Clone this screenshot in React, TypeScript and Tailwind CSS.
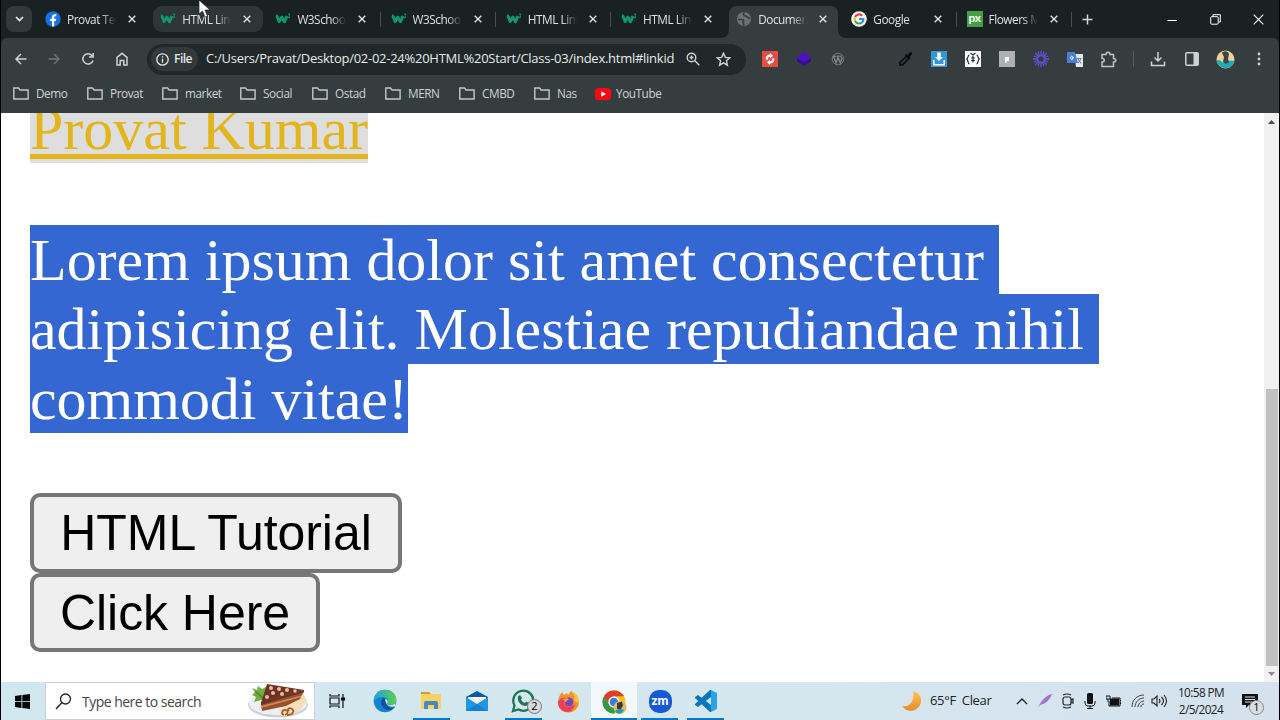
import React from "react";

type P = { children?: React.ReactNode };
const UI = "font-['Open_Sans','Noto_Sans',sans-serif]";

const Facebook = () => (
  <svg width="16" height="16" viewBox="0 0 16 16"><circle cx="8" cy="8" r="7.7" fill="#1672ea" /><path d="M7 15.6V10H5.2V7.7H7V6.2C7 4.2 8 3.2 9.800 3.200l1.500.1v2h-1C9.400 5.300 9.200 5.800 9.200 6.500v1.200h2L10.900 10H9.200v5.600z" fill="#fff" /></svg>
);
const W3 = () => (
  <svg width="16" height="16" viewBox="0 0 16 16" fill="none" stroke="#0c9a6c"><path d="M1 4.500C2.500 5 3 8 4.200 10.500L6.800 6.200l2.700 4.500L12 5" strokeWidth="3" strokeLinejoin="round" /><path d="M13 3h1.500v1.300l-.8.700.8.500v1.200H13" strokeWidth="1" /></svg>
);
const Globe = () => (
  <svg width="16" height="16" viewBox="0 0 16 16"><circle cx="8" cy="8" r="7" fill="#6b7375" /><path d="M2 8.500h4c2 0 2 1.500 1 2.500l1 3.500M8.500 1.500c-2 1.500-1 3.500 1 3.500s1.500 2.500 4.500 2.500" stroke="#353d3e" strokeWidth="1.700" fill="none" /></svg>
);
const Google = ({ s = 16 }: { s?: number }) => (
  <svg width={s} height={s} viewBox="0 0 16 16" fill="none"><circle cx="8" cy="8" r="7.800" fill="#fff" /><g strokeWidth="2.100"><path d="M4 6a4.600 4.600 0 0 1 7.300-1.300" stroke="#ea4335" /><path d="M4 10.200a4.600 4.600 0 0 1 0-4.300" stroke="#fbbc05" /><path d="M11 11.500A4.600 4.600 0 0 1 4 10.100" stroke="#34a853" /><path d="M8 8h4.500c0 1.500-.5 2.700-1.600 3.500" stroke="#4285f4" /></g></svg>
);
const Px = () => <span className="flex size-4 items-center justify-center bg-[#43a047] pb-[2px] font-['Lato',sans-serif] text-[12px] leading-none font-bold tracking-[-0.500px] text-white">px</span>;
const Close = () => (
  <svg width="8" height="8" viewBox="0 0 8 8" stroke="#dfe3e3" strokeWidth="1.400"><path d="M.7.7l6.600 6.600M7.300.7L.7 7.300" /></svg>
);

const tabs = [
  { t: "Provat Tec", i: <Facebook />, sep: false },
  { t: "HTML Link", i: <W3 />, sep: false, hover: true },
  { t: "W3Schoo", i: <W3 />, sep: true },
  { t: "W3Schoo", i: <W3 />, sep: true },
  { t: "HTML Link", i: <W3 />, sep: true },
  { t: "HTML Link", i: <W3 />, sep: false },
  { t: "Documen", i: <Globe />, sep: false, active: true },
  { t: "Google", i: <Google />, sep: true },
  { t: "Flowers M", i: <Px />, sep: true },
];

const Tab = ({ t, i, sep, hover, active }: { t: string; i: React.ReactNode; sep: boolean; hover?: boolean; active?: boolean }) => (
  <div className="relative h-[38px] w-[115.200px] shrink-0 pt-[6px]">
    {active && (
      <svg className="absolute top-[6px] left-[-9px]" width="129" height="32" viewBox="0 0 129 32"><path d="M0 32q9 0 9-9V8q0-8 8-8h93q8 0 8 8v15q0 9 9 9z" fill="#353d3e" /></svg>
    )}
    <div className={`relative flex h-[26px] w-[110px] items-center rounded-[9px] pl-[7px] ${hover ? "bg-[#2e3638]" : ""}`}>
      <span className="mr-[6px] flex size-4 shrink-0">{i}</span>
      <span className="w-[49px] overflow-hidden pt-px text-[11.800px] tracking-[-0.450px] whitespace-nowrap text-[#dce1e1] [mask-image:linear-gradient(90deg,#000_70%,transparent_100%)]">{t}</span>
      <span className="ml-[12px] shrink-0"><Close /></span>
    </div>
    {sep && <span className="absolute top-[12px] right-[2.500px] h-[15px] w-px bg-[#465052]" />}
  </div>
);

const Cell = ({ children }: P) => <span className="flex w-[33.850px] shrink-0 items-center justify-center">{children}</span>;
const Folder = () => (
  <svg width="16" height="13" viewBox="0 0 16 13" fill="none" stroke="#c4c9ca" strokeWidth="1.400"><path d="M.8 1h4.700l1.600 2h8v9H.8z" /></svg>
);
const marks: [string, string][] = [["Demo", "w-[74px]"], ["Provat", "w-[75px]"], ["market", "w-[78px]"], ["Social", "w-[72px]"], ["Ostad", "w-[73px]"], ["MERN", "w-[74px]"], ["CMBD", "w-[75px]"], ["Nas", "w-[61px]"]];

const Chrome = () => (
  <svg width="28" height="28" viewBox="0 0 28 28"><circle cx="12" cy="13" r="11.500" fill="#fbc116" /><path d="M2 7.300A11.500 11.500 0 0 1 22 7.300H12a5.700 5.700 0 0 0-5 8.400z" fill="#de3d31" /><path d="M2 7.300A11.500 11.500 0 0 0 12 24.500l5-8.700a5.700 5.700 0 0 1-10 0z" fill="#2e9a4b" /><circle cx="12" cy="13" r="5.500" fill="#fff" /><circle cx="12" cy="13" r="4.300" fill="#3b78e0" /><circle cx="18" cy="18.500" r="6.500" fill="#e3b76f" /><path d="M15 14l5-1.500 1 4-3 5-3-2z" fill="#3b3b38" /><path d="M13 22c2-2 6-3 9-1-2 4.500-7 5-9 1z" fill="#18a5a5" /></svg>
);
const Edge = () => (
  <svg width="24" height="24" viewBox="0 0 24 24"><defs><linearGradient id="eg" x2="1"><stop stopColor="#1da4dc" /><stop offset="1" stopColor="#5bd04a" /></linearGradient></defs><circle cx="12" cy="12" r="11.300" fill="#1683d2" /><path d="M.8 12C1 5 6 .7 12 .7c6.500 0 11.300 4.500 11.300 9.500 0 4-3 6-6 6-2.500 0-3.500-1.200-2.500-2.500 1-1.600 0-5.200-4.500-5.700C6 7.500 2 9.500.8 12z" fill="url(#eg)" /><path d="M10 9c-4 4-1 12 6 12 3 0 5-1.500 6-3-4 2-9 0-9-5 0-2-1-4-3-4z" fill="#114f9f" /><path d="M12 10.500c1.500-1 3.500 1.500 2.500 3.300-1 1.600 1 2.500 2.500 2.500 2 0 4-.8 5.300-2.300L22.500 17c-4 2-9.500 0-10.500-6.500z" fill="#d5e6ed" /></svg>
);
const Cake = () => (
  <svg width="62" height="36" viewBox="0 0 62 36"><ellipse cx="31" cy="22" rx="30" ry="12.500" fill="#cbd0d6" /><ellipse cx="31" cy="20.500" rx="29" ry="11.500" fill="#edf0f3" /><path d="M5 5l5 2 1-4 4 3 6-3-2 9 2 3-14 4 2-5-4-2 3-3z" fill="#71ae3d" /><path d="M8 8l9 8" stroke="#4c8431" strokeWidth="1.500" /><path d="M20 1l37 6-43 13z" fill="#6b3324" /><path d="M14 19L57 7l-3 13-39 8z" fill="#98502b" /><path d="M14 19L57 7v2L14 22z" fill="#6b3324" /><path d="M14 23l42-11v1.500L14 25z" fill="#c98a5d" /><path d="M31 27l22-11 3-6 4 8-8 11-16 5z" fill="#f4dfba" /><g fill="#f2b8a0"><circle cx="24" cy="5" r="2" /><circle cx="32" cy="6" r="2" /><circle cx="40" cy="7" r="2" /><circle cx="48" cy="8" r="1.800" /><circle cx="26" cy="10" r="2" /><circle cx="35" cy="11" r="2" /><circle cx="20" cy="14" r="2" /></g><path d="M37 32c-3-1-2-5 1-5 4 0 3 4 0 5m2 0c6 0 8-4 5-6s-5 0-3 2" fill="none" stroke="#a65e30" strokeWidth="1.800" /></svg>
);

const Task = ({ children, w, line, active }: P & { w: string; line?: string; active?: boolean }) => (
  <div className={`relative flex h-full shrink-0 items-center justify-center ${w} ${active ? "bg-[#f3f8fb]" : ""}`}>
    {children}
    {line && <span className={`absolute bottom-0 h-[2px] bg-[#0878c8] ${line}`} />}
  </div>
);

export default function App() {
  return (
    <div className={`relative flex h-[720px] w-[1280px] flex-col overflow-hidden border-x border-black bg-white ${UI}`}>
      <header className="flex h-[38px] shrink-0 bg-[#192123]">
        <button className="mt-[6px] mr-[6px] ml-[5px] flex size-[26px] shrink-0 items-center justify-center rounded-[8px] bg-[#323a3c]">
          <svg width="9" height="6" viewBox="0 0 9 6" fill="none" stroke="#e9eded" strokeWidth="1.700"><path d="M1 1l3.500 3.500L8 1" /></svg>
        </button>
        {tabs.map((x, k) => <Tab key={k} {...x} />)}
        <svg className="mt-[13.500px] ml-[7px] shrink-0" width="11" height="11" viewBox="0 0 11 11" stroke="#d4dada" strokeWidth="1.500"><path d="M5.500.5v10M.5 5.500h10" /></svg>
        <div className="mt-[13px] ml-auto flex h-3 items-center gap-[32px] pr-[15px]">
          <svg width="11" height="11" viewBox="0 0 11 11" stroke="#fff"><path d="M.5 6.500h9.500" /></svg>
          <svg width="11" height="11" viewBox="0 0 11 11" fill="none" stroke="#fff"><rect x=".7" y="2.700" width="7.500" height="7.500" rx="1" /><path d="M3 2.500V.7h7.300V8H8.500" /></svg>
          <svg width="11" height="11" viewBox="0 0 11 11" stroke="#fff" strokeWidth="1.100"><path d="M.7.7l9.600 9.600M10.300.7L.7 10.300" /></svg>
        </div>
      </header>

      <div className="shrink-0 bg-[#192123]">
        <div className="flex h-[42px] items-center rounded-t-[6px] bg-[#353d3e]">
          <div className="flex w-[146px] shrink-0 items-center pl-[13px]">
            <svg width="14" height="14" viewBox="0 0 14 14" fill="none" stroke="#cdd2d3" strokeWidth="1.500"><path d="M12.500 7H2M7 2L2 7l5 5" /></svg>
            <svg className="ml-[19px]" width="14" height="14" viewBox="0 0 14 14" fill="none" stroke="#70787a" strokeWidth="1.300"><path d="M1.500 7H12M7 2l5 5-5 5" /></svg>
            <svg className="ml-[20px]" width="14" height="14" viewBox="0 0 14 14" fill="none" stroke="#cdd2d3" strokeWidth="1.500"><path d="M12 8.500A5.200 5.200 0 1 1 11 3.500l1 1.200M12.200 1v4H8" /></svg>
            <svg className="ml-[20px]" width="14" height="14" viewBox="0 0 14 14" fill="none" stroke="#cdd2d3" strokeWidth="1.500"><path d="M2 5.300L7 1.300l5 4V13H8.800V8.500H5.200V13H2z" /></svg>
          </div>
          <div className="flex h-[31px] w-[599px] shrink-0 items-center rounded-full bg-[#202829] pl-[4px]">
            <div className="flex h-[24px] w-[47px] items-center rounded-full bg-[#31393a] pl-[5px]">
              <svg width="13" height="13" viewBox="0 0 13 13" fill="none" stroke="#e1e5e5" strokeWidth="1.300"><circle cx="6.500" cy="6.500" r="5.700" /><path d="M6.500 5.700v4M6.500 3.200v1.400" /></svg>
              <span className="ml-[5px] text-[12px] font-semibold tracking-[-0.500px] text-[#e1e5e5]">File</span>
            </div>
            <span className="ml-[8px] w-[480px] text-[13px] tracking-[-0.265px] whitespace-nowrap text-[#e6eaea]">C:/Users/Pravat/Desktop/02-02-24%20HTML%20Start/Class-03/index.html#linkid</span>
            <svg className="shrink-0" width="14" height="14" viewBox="0 0 14 14" fill="none" stroke="#cdd2d3" strokeWidth="1.400"><circle cx="5.500" cy="5.500" r="4.300" /><path d="M8.800 8.800l4.500 4.500M3.500 5.500h4M5.500 3.500v4" /></svg>
            <svg className="ml-[16px] shrink-0" width="15" height="15" viewBox="0 0 15 15" fill="none" stroke="#cdd2d3" strokeWidth="1.400"><path d="M7.500 1.200l1.800 4.200 4.500.4-3.400 3 1 4.400-3.900-2.400-3.900 2.400 1-4.400-3.400-3 4.500-.4z" /></svg>
          </div>
          <div className="ml-[7px] flex">
            <Cell><svg width="16" height="16" viewBox="0 0 16 16"><rect width="16" height="16" rx="1" fill="#e94b45" /><path d="M4 9c-1-3 1-5.500 4-5.500V1.800L11 5 8 7.500V5.700C6.500 5.700 5.700 7 6.200 8.300zM12 7c1 3-1 5.500-4 5.500v1.700L5 11l3-2.500v1.800c1.500 0 2.300-1.300 1.800-2.600z" fill="#fff" /></svg></Cell>
            <Cell><svg width="16" height="16" viewBox="0 0 16 16"><path d="M8 1l7 5-7 5-7-5z" fill="#5010c8" /><path d="M1 7l7 4 7-4v3l-7 5-7-5z" fill="#3a0b9c" /></svg></Cell>
            <Cell><svg width="14" height="14" viewBox="0 0 14 14" fill="none" stroke="#7e8688"><circle cx="7" cy="7" r="5.800" strokeWidth=".8" /><path d="M2.500 4.500l2.500 6.500L7 5l2.300 6L11 6.500 9.500 3.500M1.800 4.300h3M5.600 4.300h3" strokeWidth="1.400" /></svg></Cell>
            <Cell />
            <Cell><svg width="15" height="16" viewBox="0 0 15 16"><path d="M9 5l2 2-6.500 7H1.800v-2.500z" fill="none" stroke="#07070d" strokeWidth="1.600" /><path d="M7 4l1-1 1.500 1L12 1.500q2-1 2 1.500L11.500 6l1 1-1.500 1.500z" fill="#07070d" /></svg></Cell>
            <Cell><svg width="16" height="16" viewBox="0 0 16 16"><rect width="16" height="16" fill="#3399d5" /><path d="M6.300 1.500h3.400V6H12l-4 4-4-4h2.300zM2 9h1.500v4h9V9H14v5.500H2z" fill="#fff" /></svg></Cell>
            <Cell><svg width="16" height="16" viewBox="0 0 16 16"><rect width="16" height="16" fill="#fff" /><path d="M4.500 4C2.500 4 3.500 7 1.800 8c1.700 1 .7 5 2.700 5M11.500 4c2 0 1 3 2.700 4-1.700 1-.7 5-2.700 5M5.500 2L8 4l2.500-2M6.200 7h3.600M6.200 9.500h3.600M8 5v6.500" fill="none" stroke="#20292b" strokeWidth="1.200" /></svg></Cell>
            <Cell><svg width="16" height="16" viewBox="0 0 16 16"><rect width="16" height="16" fill="#aeb1b2" /><path d="M6 6h4v4H8v1.500H6z" fill="#f7f7f7" /></svg></Cell>
            <Cell><svg width="16" height="16" viewBox="0 0 16 16" stroke="#6450da" strokeWidth="1.300"><circle cx="8" cy="8" r="3.500" fill="none" /><path d="M8 0v5M8 11v5M0 8h5M11 8h5M2.300 2.300L6 6M10 10l3.700 3.700M2.300 13.700L6 10M10 6l3.700-3.700M5 .7l1.500 4M9.500 11.300l1.500 4M.7 5l4 1.500M11.300 9.500l4 1.500M.7 11l4-1.500M11.300 6.500l4-1.500M5 15.300l1.500-4M9.500 4.700L11 .7" /></svg></Cell>
            <Cell><svg width="16" height="16" viewBox="0 0 16 16"><path d="M7 3h9v13H9z" fill="#e6e9ec" /><path d="M0 1h8l3 11H0z" fill="#487fdc" /><path d="M7 6.500H5v1h1.100c-.5 1.500-3 1-2.600-1 .3-1.500 1.700-1.500 2.400-.8" fill="none" stroke="#fff" /><path d="M10 7.500h4.500M11 8l3 4.500M14 8l-3 4" stroke="#667a9b" fill="none" /></svg></Cell>
            <Cell><svg width="17" height="17" viewBox="0 0 17 17" fill="none" stroke="#bfc5c6" strokeWidth="1.500"><path d="M2 3.500h4c0-3 4-3 4 0h3.500v4c3 0 3 3.500 0 3.500v4.500H2V11c3 0 3-3.800 0-3.800z" /></svg></Cell>
          </div>
          <span className="ml-[7.500px] h-4 w-px bg-[#535d5f]" />
          <div className="ml-[7px] flex">
            <Cell><svg width="16" height="16" viewBox="0 0 16 16" fill="none" stroke="#cdd2d3" strokeWidth="1.500"><path d="M8 1v9M4.500 6.500L8 10l3.500-3.500M1.500 10.500v4h13v-4" /></svg></Cell>
            <Cell><svg width="14" height="14" viewBox="0 0 14 14"><rect x=".8" y=".8" width="12.400" height="12.400" rx="1" fill="none" stroke="#cdd2d3" strokeWidth="1.500" /><path d="M8.500 1H13v12H8.500z" fill="#cdd2d3" /></svg></Cell>
            <Cell><svg width="19" height="19" viewBox="0 0 19 19"><circle cx="9.500" cy="9.500" r="9" fill="#efd19b" /><path d="M.6 10.500C3 9 5 11 7 12.500c4-2 8-2 11.300-1.500C17 20 3 21 .6 10.500z" fill="#1bacb4" /><path d="M6 3c2-3 6-2 7 1l-1 5 1 3-3 2-3-2 1-5z" fill="#3d4545" /></svg></Cell>
            <Cell><svg width="4" height="14" viewBox="0 0 4 14" fill="#cdd2d3"><circle cx="2" cy="2" r="1.400" /><circle cx="2" cy="7" r="1.400" /><circle cx="2" cy="12" r="1.400" /></svg></Cell>
          </div>
        </div>
      </div>

      <div className="flex h-[33px] shrink-0 items-center bg-[#353d3e] pb-[6px] pl-[12px] text-[11.800px] tracking-[-0.450px] text-[#ced3d4]">
        {marks.map(([t, w]) => <div key={t} className={`flex shrink-0 items-center gap-[7px] ${w}`}><Folder />{t}</div>)}
        <div className="flex items-center gap-[5px]">
          <svg width="16" height="12" viewBox="0 0 16 12"><rect width="16" height="12" rx="3.500" fill="#f50a16" /><path d="M6.300 3.300L11 6 6.300 8.700z" fill="#fff" /></svg>
          YouTube
        </div>
      </div>

      <main className="flex h-[569px] shrink-0 overflow-hidden bg-white">
        <div className="flex-1 overflow-hidden pl-[29px]">
          <div className="mt-[-19px] font-['Liberation_Serif',serif] text-[60px] leading-[67.300px] tracking-[-0.020px] whitespace-pre">
            <div className="flex h-[69px]"><span className="bg-[#dedede] pt-[2px] text-[#e3b51d] underline decoration-[5px] underline-offset-[5px] [text-decoration-skip-ink:none]">Provat Kumar</span></div>
            <div className="mt-[62px] flex flex-col items-start text-white">
              <span className="bg-[#3467d1] pt-[2px]">{"Lorem ipsum dolor sit amet consectetur "}</span>
              <span className="bg-[#3467d1] pt-[2px]">{"adipisicing elit. Molestiae repudiandae nihil "}</span>
              <span className="bg-[#3467d1] pt-[2px]">commodi vitae!</span>
            </div>
          </div>
          <div className="mt-[60px] flex flex-col items-start font-['Liberation_Sans',sans-serif] text-[50px] leading-[57px] tracking-[-0.050px] text-black">
            <button className="flex h-[80px] w-[372px] items-center justify-center rounded-[10px] border-4 border-[#767676] bg-[#efefef] pt-[2px] whitespace-nowrap">HTML Tutorial</button>
            <button className="flex h-[79px] w-[290px] items-center justify-center rounded-[10px] border-4 border-[#767676] bg-[#efefef] pt-[2px] whitespace-nowrap">Click Here</button>
          </div>
        </div>
        <div className="flex w-[15px] shrink-0 flex-col items-center bg-[#f1f1f1]">
          <svg className="mt-[7px]" width="7" height="4" viewBox="0 0 7 4"><path d="M0 4l3.500-4L7 4z" fill="#4b4b4b" /></svg>
          <div className="mt-[265px] h-[277px] w-[12px] bg-[#c1c1c1]" />
          <svg className="mt-[6px]" width="7" height="4" viewBox="0 0 7 4"><path d="M0 0l3.500 4L7 0z" fill="#8c8c8c" /></svg>
        </div>
      </main>

      <footer className="flex h-[38px] shrink-0 items-center bg-[linear-gradient(90deg,#cfe7ef_0%,#d5e7ee_50%,#d5e2ee_100%)] text-[#202325]">
        <div className="flex w-[44px] shrink-0 items-center justify-center pr-[2px]">
          <svg width="15" height="15" viewBox="0 0 15 15"><path d="M0 2l6.500-1v6H0zM7.300.9L15 0v7H7.300zM0 7.800h6.500v6.100L0 13zM7.300 7.800H15V15l-7.700-1z" fill="#050708" /></svg>
        </div>
        <div className="flex h-full w-[270px] shrink-0 items-center border border-[#cad0d3] bg-white pl-[9px]">
          <svg width="17" height="17" viewBox="0 0 17 17" fill="none" stroke="#222" strokeWidth="1.300"><circle cx="10.500" cy="6" r="5" /><path d="M7 9.500L1 16" /></svg>
          <span className="ml-[10px] w-[165px] text-[14px] tracking-[-0.520px] whitespace-nowrap text-[#444]">Type here to search</span>
          <Cake />
        </div>
        <Task w="w-[45px]"><svg width="17" height="16" viewBox="0 0 17 16" fill="none" stroke="#111" strokeWidth="1.200"><path d="M1 1v2h9V1M1 15v-2h9v2M1 5h9v6H1zM14 1v14" /><path d="M12.500 5h3v2h-3z" fill="#111" /></svg></Task>
        <Task w="w-[49px]"><Edge /></Task>
        <Task w="w-[43px]" line="left-[4px] w-[37px]"><svg width="22" height="20" viewBox="0 0 22 20"><path d="M1 3V1h8l2 2z" fill="#d99622" /><path d="M1 3h20v15H1z" fill="#fad263" /><path d="M4 18v-6q0-2 2-2h10q2 0 2 2v6h-4v-4H8v4z" fill="#4589be" /></svg></Task>
        <Task w="w-[49px]"><svg width="24" height="22" viewBox="0 0 24 22"><path d="M1 7l11-6 11 6v14H1z" fill="#0b58a7" /><path d="M3 7h18v7H3z" fill="#f4f8fc" /><path d="M1 7l11 7 11-7v14H1z" fill="#2196e4" /><path d="M1 21l11-7 11 7z" fill="#1382d4" /></svg></Task>
        <Task w="w-[44px]" line="left-[4px] w-[37px]">
          <svg width="24" height="24" viewBox="0 0 24 24" fill="none" stroke="#1e7553" strokeWidth="2.300"><path d="M2 22l1.500-5.500A10 10 0 1 1 7.500 20.500z" /><path d="M7.500 7l1.500-1 2 3-1 1.500c1 2 2 3 4 3.500l1-1.500 3 1.500c-1 3-3 3.500-6 2.500-3-1-6-5-5-9z" fill="#1e7553" stroke="none" /></svg>
          <span className="absolute top-[17px] left-[26px] flex size-[15px] items-center justify-center rounded-full border border-[#777] bg-[#d5dadd] text-[11px] text-black">2</span>
        </Task>
        <Task w="w-[46px]"><svg width="23" height="23" viewBox="0 0 23 23"><path d="M3 5l2-3 2 3 3-2 1 2 3-4c3 2 8 5 8 11a10.500 10.500 0 0 1-21 0C1 9 2 7 3 5z" fill="#f7902d" /><path d="M14 1c4 3 4 7 3 10l5 2c0-5-2-9-8-12z" fill="#fcc82f" /><path d="M1 12c2-3 4-5 8-4l2 2-4 2c0 7 10 5 11 1 0 4-3 9-8 9-5 0-9-4-9-10z" fill="#ec3f55" /><circle cx="12" cy="12" r="4.500" fill="#7947bc" /><path d="M6 9c3-1 5-1 6 1-3 0-2 2-4 2z" fill="#f8a12f" /></svg></Task>
        <Task w="w-[46px]" active line="left-0 w-[46px]"><span className="mt-[3px] ml-[4px]"><Chrome /></span></Task>
        <Task w="w-[46px]" line="left-[4px] w-[37px]"><span className="flex size-[23px] items-center justify-center rounded-[10px] bg-[#1659d6] pb-[2px] font-['Lato',sans-serif] text-[13px] leading-none font-black text-white">zm</span></Task>
        <Task w="w-[45px]" line="left-[4px] w-[37px]"><svg width="24" height="24" viewBox="0 0 24 24"><path d="M17 1l6 3v16l-6 3z" fill="#28a3ea" /><path d="M17 1v7L4 18l-3-2V15L16 1zM1 8l3-2 13 10v7h-1L1 9z" fill="#0876be" /></svg></Task>
        <div className="ml-auto flex h-full shrink-0 items-center">
          <svg width="22" height="22" viewBox="0 0 22 22"><defs><linearGradient id="mn" y2="1" x2="0"><stop stopColor="#ffc451" /><stop offset="1" stopColor="#e98a28" /></linearGradient></defs><path d="M12 1c7 2 10 8 7 14S7 24 1 16c7 2 13-5 11-15z" fill="url(#mn)" /></svg>
          <span className="ml-[7px] w-[86px] text-[13px] tracking-[-0.350px] whitespace-pre">65°F  Clear</span>
          <svg width="12" height="8" viewBox="0 0 12 8" fill="none" stroke="#222" strokeWidth="1.400"><path d="M1 7l5-5 5 5" /></svg>
          <svg className="ml-[9px]" width="16" height="16" viewBox="0 0 16 16"><path d="M1 15C4 7 10 2 15 1 13 7 8 11 3 12z" fill="#a073cc" /></svg>
          <svg className="ml-[8px]" width="14" height="16" viewBox="0 0 14 16" fill="none" stroke="#222" strokeWidth="1.200"><rect x="2" y="4" width="8" height="8" rx="2" /><path d="M10 7l2-1v4l-2-1M2 2q4-2 8 0M2 14q4 2 8 0" /></svg>
          <svg className="ml-[9px]" width="12" height="16" viewBox="0 0 12 16"><rect x="3" width="6" height="11" rx="1.500" fill="#111" /><path d="M1 8v2q0 3 3 3h4q3 0 3-3V8M6 13v3M3 15.500h6" fill="none" stroke="#111" /></svg>
          <svg className="ml-[10px]" width="15" height="12" viewBox="0 0 15 12"><rect x="4" y="3.500" width="9" height="7" fill="#111" /><path d="M3 6v5h11V3H6M14 5.500h1v3h-1M2 4v3M0 1h4v3H0z" fill="none" stroke="#111" /></svg>
          <svg className="ml-[10px]" width="13" height="14" viewBox="0 0 13 14" fill="none" stroke="#444"><path d="M1 13C1 6 6 1 13 1M4 13c0-5 4-9 9-9M7 13c0-3 3-6 6-6M10 13c0-2 1-3 3-3" /></svg>
          <svg className="ml-[7px]" width="17" height="14" viewBox="0 0 17 14" fill="none" stroke="#222" strokeWidth="1.100"><path d="M1 5h2l3-3v10L3 9H1zM8 5q2 2 0 4M10.500 3q4 4 0 8M13 1q5 6 0 12" /></svg>
          <div className="ml-[8px] w-[50px] text-center text-[11.800px] leading-[17px] tracking-[-0.600px] whitespace-nowrap"><div>10:58 PM</div><div>2/5/2024</div></div>
          <div className="relative ml-[16px] flex w-[37px] items-center">
            <svg width="16" height="16" viewBox="0 0 16 16"><path d="M0 1h16v11H7l-3 3v-3H0z" fill="#111" /><path d="M3 4h10M3 6.500h10M3 9h7" stroke="#d5e2ee" /></svg>
            <span className="absolute top-[7px] left-[7px] flex size-[15px] items-center justify-center rounded-full border border-[#888] bg-[#d9dfe2] text-[11px] text-black">1</span>
          </div>
        </div>
      </footer>

      <svg className="absolute top-0 left-[197px]" width="12" height="19" viewBox="0 0 12 19"><path d="M1 0v14l3.500-3 2.500 6 2.500-1-2.500-6H12z" fill="#fff" stroke="#222" strokeWidth=".7" /></svg>
    </div>
  );
}
